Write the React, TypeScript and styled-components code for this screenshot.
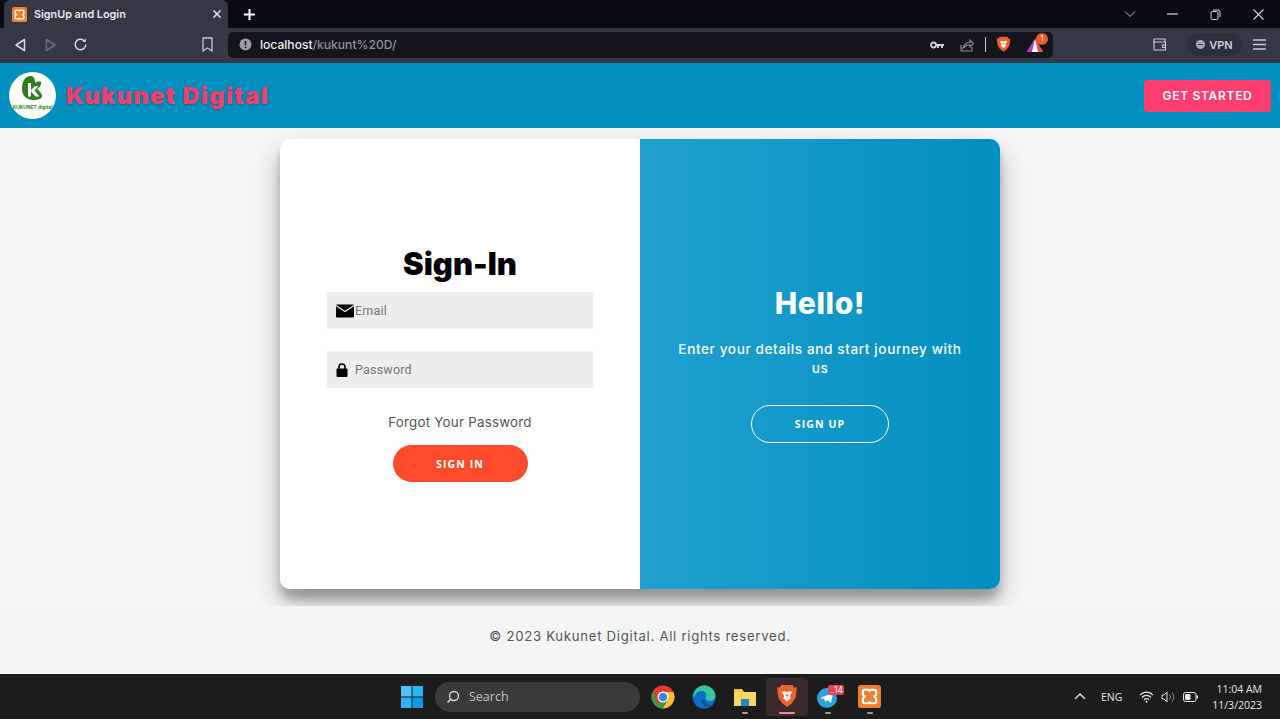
import React from "react";
import styled, { createGlobalStyle } from "styled-components";

const Global = createGlobalStyle`
  html, body { margin: 0; padding: 0; height: 100%; overflow: hidden; }
  body { font-family: "Inter", "Liberation Sans", sans-serif; background: #f6f5f7; }
  * { box-sizing: border-box; }
`;

const Screen = styled.div`
  width: 1280px; height: 719px; display: flex; flex-direction: column; overflow: hidden;
`;

/* Browser chrome */
const TabStrip = styled.div`
  height: 28px; background: #0a0a14; display: flex; align-items: flex-end; padding-left: 4px; flex: none;
`;
const Tab = styled.div`
  width: 224px; height: 28px; background: #363745; border-radius: 6px 6px 0 0; display: flex; align-items: center;
  padding: 0 6px 0 8px; gap: 7px; color: #e6e6ea; font-size: 10.8px; font-weight: 600;
`;
const TabTitle = styled.span` flex: 1; white-space: nowrap; `;
const NewTab = styled.div`
  width: 42px; height: 28px; display: flex; align-items: center; justify-content: center;
`;
const Spacer = styled.div` flex: 1; `;
const WindowButtons = styled.div`
  display: flex; align-items: center; height: 28px; color: #d8d8de; padding-right: 0;
`;
const WindowButton = styled.div`
  width: 43px; height: 28px; display: flex; align-items: center; justify-content: center;
`;
const Toolbar = styled.div`
  height: 35px; background: #363745; display: flex; align-items: center; flex: none; padding-left: 14px; padding-bottom: 2px;
  color: #d8d8de;
`;
const NavIcon = styled.div<{ $w?: number }>`
  width: ${p => p.$w ?? 30}px; height: 24px; display: flex; align-items: center; justify-content: flex-start;
`;
const UrlBar = styled.div`
  width: 825px; height: 26px; background: #14151e; border-radius: 5px; display: flex; align-items: center;
  padding: 0 8px 0 11px; margin-left: 5px; font-size: 12.1px; font-weight: 500; color: #8f909c;
`;
const UrlHost = styled.span` color: #f0f0f4; `;
const UrlIcons = styled.div`
  margin-left: auto; display: flex; align-items: center; gap: 0;
`;
const UrlDivider = styled.div` width: 1px; height: 15px; background: #c8c8d0; margin: 0 10px 0 11px; `;
const ToolbarRight = styled.div`
  margin-left: auto; display: flex; align-items: center; padding-right: 14px;
`;
const VpnPill = styled.div`
  width: 55px; height: 23px; border-radius: 12px; background: #2e2f3c; display: flex; align-items: center; justify-content: center; gap: 4px;
  font-size: 11px; font-weight: 600; color: #cfd0d8; margin: 0 11px 0 20px;
`;
const VpnDot = styled.div`
  width: 9px; height: 9px; border-radius: 50%; background: #a8a9b2; position: relative;
  &::after { content: ""; position: absolute; left: 2px; right: 2px; top: 4px; height: 1px; background: #2e2f3c; }
`;
const AlertWrap = styled.div` position: relative; width: 20px; height: 18px; margin-left: 14px; `;
const AlertBadge = styled.div`
  position: absolute; right: -3px; top: -3px; width: 12px; height: 12px; border-radius: 50%; background: #ee5a2c; color: #fff;
  font-size: 7px; display: flex; align-items: center; justify-content: center;
`;

/* Site header */
const SiteHeader = styled.header`
  height: 65px; background: #008fbf; display: flex; align-items: center; padding: 0 9px 0 9px; flex: none;
`;
const LogoCircle = styled.div`
  width: 47px; height: 47px; border-radius: 50%; background: #fff; flex: none;
  display: flex; align-items: center; justify-content: center;
`;
const Brand = styled.div`
  margin-left: 10px; font-size: 23.5px; font-weight: 900; color: #f43f6e; letter-spacing: 1.4px;
  text-shadow: 1px 1px 3px rgba(0, 0, 0, 0.25); white-space: nowrap;
`;
const GetStarted = styled.button`
  margin-left: auto; width: 127px; height: 32px; background: #ff3d6f; color: #fff; border: 0; border-radius: 4px;
  font-family: "Inter", sans-serif; font-size: 12px; font-weight: 600; letter-spacing: 0.7px;
`;

/* Main */
const Main = styled.main`
  height: 478px; background: #f6f5f7; display: flex; justify-content: center; padding-top: 11px; flex: none; overflow: hidden;
`;
const Card = styled.div`
  width: 720px; height: 450px; border-radius: 10px; display: flex; overflow: hidden; background: #fff;
  box-shadow: 0 14px 28px rgba(0, 0, 0, 0.25), 0 10px 10px rgba(0, 0, 0, 0.22);
`;
const LeftPane = styled.form`
  width: 360px; background: #fff; display: flex; flex-direction: column; align-items: center; padding-top: 106px;
`;
const Title = styled.h1`
  margin: 0; font-size: 31px; line-height: 38px; font-weight: 900; color: #000; letter-spacing: 0;
`;
const Field = styled.div<{ $mb: number }>`
  width: 266px; height: 37px; background: #eee; display: flex; align-items: center; padding-left: 9px; margin-bottom: ${p => p.$mb}px;
`;
const FieldIcon = styled.div`
  width: 19px; display: flex; align-items: center; flex: none;
`;
const FieldText = styled.span`
  font-family: "Roboto", "Liberation Sans", sans-serif; font-size: 12.5px; color: #757575; letter-spacing: 0.2px;
`;
const Fields = styled.div` margin-top: 9px; `;
const Forgot = styled.div`
  font-size: 13.3px; color: #555; letter-spacing: 0.25px; margin-top: -1px; line-height: 16px;
`;
const SignIn = styled.button`
  margin-top: 15px; width: 135px; height: 37px; border-radius: 20px; border: 0; background: #ff4b2b; color: #fff;
  font-family: "Open Sans", sans-serif; font-size: 10.5px; font-weight: 700; letter-spacing: 1.1px;
`;
const RightPane = styled.div`
  width: 360px; background: linear-gradient(to right, #20a0d0, #008fbf); color: #fff; display: flex; flex-direction: column;
  align-items: center; padding-top: 145px;
`;
const Hello = styled.h2`
  margin: 0; font-size: 30px; line-height: 38px; font-weight: 800; color: #fff; letter-spacing: 0.6px;
`;
const Lead = styled.p`
  margin: 18px 0 0; width: 290px; text-align: center; font-size: 13.6px; line-height: 19px; font-weight: 500; letter-spacing: 0.6px;
`;
const SignUp = styled.button`
  margin-top: 27px; width: 138px; height: 38px; border-radius: 20px; border: 1px solid #fff; background: transparent; color: #fff;
  font-family: "Open Sans", sans-serif; font-size: 10.5px; font-weight: 700; letter-spacing: 1.1px;
`;

/* Footer */
const Footer = styled.footer`
  height: 68px; background: #f4f6f6; display: flex; align-items: center; justify-content: center; flex: none;
  font-size: 13.2px; color: #555; letter-spacing: 0.7px; padding-bottom: 8px;
`;

/* Taskbar */
const Taskbar = styled.div`
  height: 45px; background: #1c1c1c; flex: none; display: flex; align-items: center; position: relative; padding-left: 401px;
`;
const SearchBox = styled.div`
  width: 205px; height: 30px; border-radius: 15px; background: #3a3a3a; margin-left: 12px; display: flex; align-items: center; padding-left: 11px; gap: 9px;
  color: #c4c4c4; font-family: "Open Sans", sans-serif; font-size: 12.5px;
`;
const TrayIcon = styled.div<{ $active?: boolean; $dot?: string }>`
  width: 41.4px; height: 38px; display: flex; align-items: center; justify-content: center; position: relative; border-radius: 4px;
  background: ${p => (p.$active ? "#3a2a2c" : "transparent")};
  &::after {
    content: ""; display: ${p => (p.$dot ? "block" : "none")}; position: absolute; bottom: 2px; left: 50%; transform: translateX(-50%);
    width: ${p => (p.$active ? 16 : 6)}px; height: 2px; border-radius: 1px; background: ${p => p.$dot};
  }
`;
const TrayGroup = styled.div` display: flex; margin-left: 2px; `;
const TaskBadge = styled.div`
  position: absolute; top: 7px; right: 5px; background: #e8404a; color: #fff; font-size: 8.5px; border-radius: 2px; padding: 0 1px 0 2px; line-height: 10px;
`;
const System = styled.div`
  position: absolute; right: 0; top: 0; bottom: 0; display: flex; align-items: center; color: #e4e4e4; padding-right: 18px;
  font-family: "Open Sans", sans-serif;
`;
const Lang = styled.span` font-size: 10.5px; margin: 0 17px 0 15px; font-weight: 500; `;
const Clock = styled.div`
  margin-left: 14px; text-align: right; font-size: 10.5px; line-height: 16px;
`;

const Tri = ({ fill = "none", stroke = "#d8d8de", flip = false }: { fill?: string; stroke?: string; flip?: boolean }) => (
  <svg width="13" height="14" viewBox="0 0 13 14" style={flip ? { transform: "scaleX(-1)" } : undefined}>
    <path d="M10.500 1.500 L2 7 L10.500 12.500 Z" fill={fill} stroke={stroke} strokeWidth="1.500" strokeLinejoin="round" />
  </svg>
);

const Xampp = ({ size }: { size: number }) => (
  <svg width={size} height={size} viewBox="0 0 24 24">
    <rect width="24" height="24" rx="3" fill="#ee7f2d" />
    <path d="M7 5h3.500c1 0 1.500 1 1.500 2 0-1 .5-2 1.500-2H17a2 2 0 0 1 2 2v2c0 1.500-1.500 3-3 3 1.500 0 3 1.500 3 3v2a2 2 0 0 1-2 2h-3.500c-1 0-1.500-1-1.500-2 0 1-.5 2-1.500 2H7a2 2 0 0 1-2-2v-2c0-1.500 1.500-3 3-3-1.500 0-3-1.500-3-3V7a2 2 0 0 1 2-2z" fill="none" stroke="#fff" strokeWidth="2.200" />
  </svg>
);

const BraveIcon = ({ size }: { size: number }) => (
  <svg width={size} height={size * 1.1} viewBox="0 0 20 22">
    <path d="M5 1h10l2 2.500 2-.5-1 9-3.500 5.500L10 21l-4.500-3.500L2 12 1 3l2 .5z" fill="#f1602a" />
    <path d="M5 7l3-.5 2 1 2-1 3 .5-2.500 4 1 2-3.500 3-3.500-3 1-2z" fill="#fff" />
    <path d="M8.500 9.500h3L10 12z" fill="#f1602a" />
  </svg>
);

const App = () => (
  <Screen>
    <Global />
    <TabStrip>
      <Tab>
        <Xampp size={15} />
        <TabTitle>SignUp and Login</TabTitle>
        <svg width="10" height="10" viewBox="0 0 10 10"><path d="M1.500 1.500l7 7M8.500 1.500l-7 7" stroke="#e6e6ea" strokeWidth="1.500" /></svg>
      </Tab>
      <NewTab>
        <svg width="13" height="13" viewBox="0 0 13 13"><path d="M6.500 1v11M1 6.500h11" stroke="#fff" strokeWidth="2" /></svg>
      </NewTab>
      <Spacer />
      <WindowButtons>
        <WindowButton>
          <svg width="12" height="8" viewBox="0 0 12 8"><path d="M1 1.500l5 5 5-5" fill="none" stroke="#b8b8c0" strokeWidth="1" /></svg>
        </WindowButton>
        <WindowButton>
          <svg width="11" height="2" viewBox="0 0 11 2"><path d="M0 1h11" stroke="#d8d8de" strokeWidth="1.200" /></svg>
        </WindowButton>
        <WindowButton>
          <svg width="11" height="11" viewBox="0 0 11 11"><rect x="1" y="2.500" width="7" height="8" rx="1.500" fill="none" stroke="#d8d8de" /><path d="M3 1h5a2 2 0 0 1 2 2v5" fill="none" stroke="#d8d8de" /></svg>
        </WindowButton>
        <WindowButton>
          <svg width="11" height="11" viewBox="0 0 11 11"><path d="M.5.5l10 10M10.500.5l-10 10" stroke="#d8d8de" strokeWidth="1.100" /></svg>
        </WindowButton>
      </WindowButtons>
    </TabStrip>
    <Toolbar>
      <NavIcon $w={30}><Tri /></NavIcon>
      <NavIcon $w={29}><Tri stroke="#6c6d7a" flip /></NavIcon>
      <NavIcon $w={129}>
        <svg width="15" height="15" viewBox="0 0 15 15"><path d="M12.800 7.500a5.300 5.300 0 1 1-1.700-3.900" fill="none" stroke="#d8d8de" strokeWidth="1.500" /><path d="M12.800 1.500v3.600H9.400z" fill="#d8d8de" /></svg>
      </NavIcon>
      <NavIcon $w={21}>
        <svg width="11" height="15" viewBox="0 0 11 15"><path d="M1 1h9v13l-4.500-3L1 14z" fill="none" stroke="#c8c8d0" strokeWidth="1.300" strokeLinejoin="round" /></svg>
      </NavIcon>
      <UrlBar>
        <svg width="13" height="13" viewBox="0 0 13 13" style={{ marginRight: 8 }}><circle cx="6.500" cy="6.500" r="6" fill="#9c9da6" /><path d="M6.500 3v4.200" stroke="#14151e" strokeWidth="1.500" /><circle cx="6.500" cy="9.300" r=".9" fill="#14151e" /></svg>
        <UrlHost>localhost</UrlHost>/kukunt%20D/
        <UrlIcons>
          <svg width="14" height="8" viewBox="0 0 14 8" style={{ marginRight: 16 }}><circle cx="3.500" cy="4" r="2.500" fill="none" stroke="#d0d0d8" strokeWidth="1.800" /><path d="M6 3h8v2h-1v2h-2V5H9v2H7V5H6z" fill="#d0d0d8" /></svg>
          <svg width="14" height="14" viewBox="0 0 14 14"><path d="M1 7v6h11V9" fill="none" stroke="#8f909c" strokeWidth="1.100" /><path d="M3 10c1-4 4-5.500 7-5.500V2l3.500 3.500L10 9V6.700C7.500 6.700 5 8 3 10z" fill="none" stroke="#8f909c" strokeWidth="1.100" /></svg>
          <UrlDivider />
          <BraveIcon size={15} />
          <AlertWrap>
            <svg width="20" height="18" viewBox="0 0 20 18"><path d="M10 3L18 16H2z" fill="#fff" /><path d="M10 3L2 16h5z" fill="#a73ac9" /><path d="M10 3l8 13h-5z" fill="#ef4b3f" /><path d="M7 16h6l-3-5z" fill="#fff" /></svg>
            <AlertBadge>1</AlertBadge>
          </AlertWrap>
        </UrlIcons>
      </UrlBar>
      <ToolbarRight>
        <svg width="14" height="13" viewBox="0 0 14 13"><path d="M1 3.500V11a1 1 0 0 0 1 1h10.500V4H2a1 1 0 0 1-1-1.500A1 1 0 0 1 2 1h10v3" fill="none" stroke="#c8c8d0" strokeWidth="1.200" /><path d="M13 7H9.500v2.500H13" fill="none" stroke="#c8c8d0" strokeWidth="1.200" /></svg>
        <VpnPill><VpnDot />VPN</VpnPill>
        <svg width="13" height="11" viewBox="0 0 13 11"><path d="M0 1h13M0 5.500h13M0 10h13" stroke="#c8c8d0" strokeWidth="1.300" /></svg>
      </ToolbarRight>
    </Toolbar>

    <SiteHeader>
      <LogoCircle>
        <svg width="47" height="47" viewBox="0 0 47 47" role="img" aria-label="Kukunet Digital logo">
          <path d="M22 4C15 4 13 11 13 17C13 24 18 28 24 28C29 28 33 27 33 24C33 21 30 19 28 17C31 15 33 12 32 10C30 9 27 10 26 11C26 7 25 4 22 4z" fill="#2e7d1e" />
          <path d="M19 11h3v7l4-4h3.500l-4 4.500 5 6h-4l-4.500-5v5h-3z" fill="#fff" />
          <text x="23.500" y="36.500" textAnchor="middle" fontFamily="Liberation Sans, sans-serif" fontSize="4.900" fontWeight="700" fill="#2e7d1e">KUKUNET digital</text>
        </svg>
      </LogoCircle>
      <Brand>Kukunet Digital</Brand>
      <GetStarted>GET STARTED</GetStarted>
    </SiteHeader>

    <Main>
      <Card>
        <LeftPane>
          <Title>Sign-In</Title>
          <Fields>
            <Field $mb={22}>
              <FieldIcon>
                <svg width="18" height="14" viewBox="0 0 18 14"><rect y="0.500" width="18" height="13" rx="1" fill="#000" /><path d="M0 1.500l9 6 9-6" fill="none" stroke="#eee" strokeWidth="1.200" /></svg>
              </FieldIcon>
              <FieldText>Email</FieldText>
            </Field>
            <Field $mb={27}>
              <FieldIcon>
                <svg width="12" height="14" viewBox="0 0 12 14"><rect x="0.500" y="5.500" width="11" height="8.500" rx="1" fill="#000" /><path d="M3 6V4a3 3 0 0 1 6 0v2" fill="none" stroke="#000" strokeWidth="1.600" /></svg>
              </FieldIcon>
              <FieldText>Password</FieldText>
            </Field>
          </Fields>
          <Forgot>Forgot Your Password</Forgot>
          <SignIn type="button">SIGN IN</SignIn>
        </LeftPane>
        <RightPane>
          <Hello>Hello!</Hello>
          <Lead>Enter your details and start journey with us</Lead>
          <SignUp type="button">SIGN UP</SignUp>
        </RightPane>
      </Card>
    </Main>

    <Footer>© 2023 Kukunet Digital. All rights reserved.</Footer>

    <Taskbar>
      <svg width="22" height="22" viewBox="0 0 22 22"><rect width="10.500" height="10.500" fill="#4fc3f7" /><rect x="11.500" width="10.500" height="10.500" fill="#29b6f6" /><rect y="11.500" width="10.500" height="10.500" fill="#29b6f6" /><rect x="11.500" y="11.500" width="10.500" height="10.500" fill="#0a9be8" /></svg>
      <SearchBox>
        <svg width="14" height="14" viewBox="0 0 14 14"><circle cx="8" cy="6" r="4.500" fill="none" stroke="#d8d8d8" strokeWidth="1.400" /><path d="M4.800 9.200L1.500 12.500" stroke="#d8d8d8" strokeWidth="1.600" /></svg>
        Search
      </SearchBox>
      <TrayGroup>
        <TrayIcon>
          <svg width="24" height="24" viewBox="0 0 24 24"><circle cx="12" cy="12" r="11.500" fill="#e33b2e" /><path d="M6 18.500L2.200 6A11.500 11.500 0 0 0 12 23.500l5-9z" fill="#2f9e44" /><path d="M12 7h10.300A11.500 11.500 0 0 1 12 23.500l5-9z" fill="#fbc02d" /><circle cx="12" cy="12" r="5.500" fill="#fff" /><circle cx="12" cy="12" r="4.300" fill="#3b82f6" /></svg>
        </TrayIcon>
        <TrayIcon>
          <svg width="24" height="24" viewBox="0 0 24 24"><circle cx="12" cy="12" r="11.500" fill="#0c6fc0" /><path d="M1 13C1 6 6 .5 12 .5c6 0 11.500 4.500 11.500 10.500 0 3-3 5-6 5-2 0-4-1-4-2.500 0-1 1-1.500 1-3 0-2.500-2-4.500-5-4.500-4 0-6.500 3.500-8.500 7z" fill="#37c6a0" /><path d="M9 14c0 4 3 7.500 8 7.500 2 0 3.500-.5 5-2-2 1-6 1-8-1-1-1-1-2-1-3z" fill="#0a4f96" /></svg>
        </TrayIcon>
        <TrayIcon $dot="#9a9a9a">
          <svg width="24" height="20" viewBox="0 0 24 20"><path d="M1 2h8l2 3h12v14H1z" fill="#f5c242" /><rect x="1" y="5" width="22" height="14" fill="#fbd65e" /><rect x="8" y="12" width="8" height="7" fill="#1e88d2" /></svg>
        </TrayIcon>
        <TrayIcon $active $dot="#f08a9a">
          <BraveIcon size={22} />
        </TrayIcon>
        <TrayIcon $dot="#9a9a9a">
          <svg width="24" height="24" viewBox="0 0 24 24"><circle cx="11" cy="13" r="10" fill="#2aa3e0" /><path d="M4 13l13-5-2 10-4-3-2 2-.5-3z" fill="#fff" /></svg>
          <TaskBadge>..14</TaskBadge>
        </TrayIcon>
        <TrayIcon $dot="#9a9a9a">
          <Xampp size={23} />
        </TrayIcon>
      </TrayGroup>
      <System>
        <svg width="12" height="7" viewBox="0 0 12 7"><path d="M1 6l5-5 5 5" fill="none" stroke="#e4e4e4" strokeWidth="1.400" /></svg>
        <Lang>ENG</Lang>
        <svg width="15" height="12" viewBox="0 0 15 12" style={{ marginRight: 7 }}><path d="M1 4a9 9 0 0 1 13 0M3 6.500a6 6 0 0 1 9 0M5 8.800a3.200 3.200 0 0 1 5 0" fill="none" stroke="#e4e4e4" strokeWidth="1.200" /><circle cx="7.500" cy="10.800" r="1" fill="#e4e4e4" /></svg>
        <svg width="15" height="12" viewBox="0 0 15 12" style={{ marginRight: 7 }}><path d="M1 4h2l3-3v10L3 8H1z" fill="none" stroke="#e4e4e4" /><path d="M8.500 3.500a3.500 3.500 0 0 1 0 5M11 1.500a6.500 6.500 0 0 1 0 9" fill="none" stroke="#8a8a8a" /></svg>
        <svg width="15" height="10" viewBox="0 0 15 10"><rect x=".5" y=".5" width="12.500" height="9" rx="2" fill="none" stroke="#e4e4e4" /><rect x="2" y="2" width="5.500" height="6" rx="1" fill="#e4e4e4" /><rect x="13.500" y="3.500" width="1.500" height="3" fill="#e4e4e4" /></svg>
        <Clock>11:04 AM<br />11/3/2023</Clock>
      </System>
    </Taskbar>
  </Screen>
);

export default App;
